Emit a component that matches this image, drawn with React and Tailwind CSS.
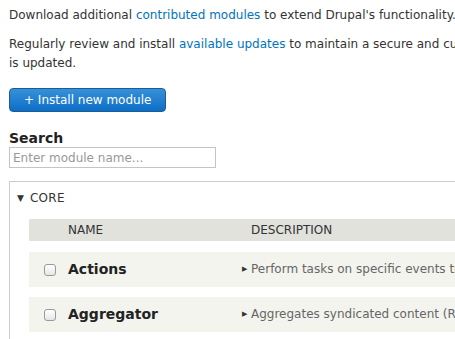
import React from "react";

const modules = [
  { name: "Actions", desc: "Perform tasks on specific events triggered within the system." },
  { name: "Aggregator", desc: "Aggregates syndicated content (RSS, RDF, and Atom feeds) from external sources." },
];

const App = () => {
  return (
    <div className="w-[455px] h-[339px] overflow-hidden bg-white text-[#333] text-[12px] leading-[19px] pl-[9px]" style={{ fontFamily: '"DejaVu Sans", sans-serif' }}>
      <p className="mt-[6px] whitespace-nowrap">
        Download additional <a className="text-[#0074bd]">contributed modules</a> to extend Drupal's functionality.
      </p>
      <p className="mt-[10px] whitespace-nowrap">
        Regularly review and install <a className="text-[#0074bd]">available updates</a> to maintain a secure and current site. Always run the update script each time a module
        <br />
        is updated.
      </p>

      <button className="mt-[15px] h-[24px] px-[14px] rounded-[4px] border border-[#1e5c90] bg-gradient-to-b from-[#3591d8] to-[#0b6ec8] text-white text-[12px] leading-[20px]">
        + Install new module
      </button>

      {/* Search */}
      <div className="mt-[17px]">
        <label className="block font-bold text-[14px] leading-[18px] text-[#222]">Search</label>
        <input
          type="text"
          placeholder="Enter module name..."
          className="block w-[207px] h-[21px] border border-[#c4c4c4] px-[3px] text-[12px] placeholder:text-[#999] outline-none"
        />
      </div>

      {/* Core fieldset */}
      <div className="mt-[13px] border border-[#ccc] border-r-0 w-[460px] h-[200px] pt-[8px] pl-[7px]">
        <div className="flex items-center gap-[6px] text-[12px] leading-[16px]">
          <span className="text-[9px]">▼</span>
          <span className="tracking-[0.3px]">CORE</span>
        </div>
        <div className="ml-[12px] mt-[13px] w-[500px] flex flex-col gap-[10px]">
          <div className="flex items-center h-[22px] bg-[#e1e2dc] text-[12px] mb-[1px]">
            <span className="w-[222px] shrink-0 pl-[39px]">NAME</span>
            <span>DESCRIPTION</span>
          </div>
          {modules.map((m) => (
            <div key={m.name} className="flex items-center h-[35px] bg-[#f3f4ee] whitespace-nowrap">
              <span className="w-[39px] shrink-0 flex justify-center pl-[3px]">
                <span className="w-[12px] h-[12px] rounded-[3px] border border-[#9a9a9a] bg-gradient-to-b from-white to-[#e6e6e6]" />
              </span>
              <span className="w-[174px] shrink-0 font-bold text-[14px] text-[#222]">{m.name}</span>
              <span className="text-[7px] text-[#333] w-[9px] shrink-0">▶</span>
              <span className="text-[#666]">{m.desc}</span>
            </div>
          ))}
        </div>
      </div>
    </div>
  );
};

export default App;
